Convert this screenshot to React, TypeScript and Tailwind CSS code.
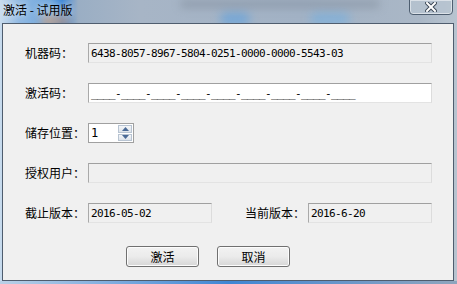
import React from "react";

const cjk = { fontFamily: '"Noto Sans CJK SC", "Noto Sans", sans-serif' };
const mono = {
  fontFamily: '"DejaVu Sans Mono", "Liberation Mono", monospace',
  letterSpacing: "-0.62px",
};

function Label({ children }: { children: React.ReactNode }) {
  return (
    <div className="w-[63px] shrink-0 text-[12px] leading-none text-black" style={cjk}>
      {children}
    </div>
  );
}

function Field({
  value,
  width,
  white,
}: {
  value?: string;
  width: string;
  white?: boolean;
}) {
  return (
    <div
      className={`${width} h-[20px] border border-t-[#a0a0a0] border-l-[#a9a9a9] border-r-[#dcdcdc] border-b-[#e3e3e3] ${
        white ? "bg-white" : "bg-[#f0f0f0]"
      } flex items-center pl-[2px] text-[11px] text-black leading-none`}
      style={mono}
    >
      {value}
    </div>
  );
}

export default function App() {
  return (
    <div
      className="relative w-[457px] h-[284px] overflow-hidden flex flex-col"
      style={{
        background:
          "linear-gradient(90deg, #c9dcee 0px, #8fb8e2 20px, #6fa7dd 50px, #3d86d6 62px, #9aaec4 78px, #a7b5c6 140px, #a2b2c5 300px, #aab7c6 420px, #b8c4d0 457px)",
      }}
    >
      {/* blurred desktop blobs */}
      <div className="absolute left-[40px] top-[14px] w-[30px] h-[14px] rounded-full bg-[#e0a070] opacity-60 blur-[4px]" />
      <div className="absolute left-[220px] top-[12px] w-[30px] h-[14px] rounded-full bg-[#5aa0e0] opacity-60 blur-[5px]" />
      <div className="absolute left-[310px] top-[12px] w-[40px] h-[14px] rounded-full bg-[#6aaee6] opacity-50 blur-[5px]" />
      <div className="absolute left-[180px] top-[0px] w-[200px] h-[8px] rounded-full bg-[#7d8896] opacity-50 blur-[4px]" />

      {/* title bar */}
      <div className="relative h-[23px] shrink-0 flex items-start">
        <div
          className="pl-[3px] pt-[3px] text-[12px] leading-[14px] text-black"
          style={{ ...cjk, textShadow: "0 0 6px rgba(255,255,255,0.9)" }}
        >
          激活 - 试用版
        </div>
        <div className="absolute left-[409px] top-[-1px] w-[44px] h-[16px] rounded-b-[4px] border border-[#4e5e70] bg-[#b8c4d2]/70 flex items-center justify-center shadow-[inset_0_0_0_1px_rgba(255,255,255,0.5)]">
          <svg width="12" height="10" viewBox="0 0 12 10">
            <path d="M2 1 L10 9 M10 1 L2 9" stroke="#3b4756" strokeWidth="4" strokeLinecap="square" />
            <path d="M2 1 L10 9 M10 1 L2 9" stroke="#ffffff" strokeWidth="2" strokeLinecap="square" />
          </svg>
        </div>
      </div>

      {/* body row */}
      <div className="relative flex flex-1 pl-[2px] pr-[3px] pb-[3px]">
        <div className="flex-1 border border-[#4f5d6e] bg-[#f0f0f0] flex flex-col pt-[19px] pl-[22px] gap-[20px]">
          <div className="flex items-center h-[20px]">
            <Label>机器码：</Label>
            <Field width="w-[344px]" value="6438-8057-8967-5804-0251-0000-0000-5543-03" />
          </div>
          <div className="flex items-center h-[20px]">
            <Label>激活码：</Label>
            <Field width="w-[344px]" white value="____-____-____-____-____-____-____-____-____" />
          </div>
          <div className="flex items-center h-[20px]">
            <Label>储存位置：</Label>
            <div className="w-[46px] h-[20px] border border-[#a0a0a0] bg-white flex items-stretch">
              <div className="flex-1 flex items-center pl-[2px] text-[12px] leading-none" style={mono}>
                1
              </div>
              <div className="w-[14px] flex flex-col my-[1px] mr-[1px] gap-[1px]">
                <div className="flex-1 border border-[#b8c4d2] bg-gradient-to-b from-[#f4f6f9] to-[#dde3ea] flex items-center justify-center">
                  <svg width="7" height="4" viewBox="0 0 7 4">
                    <path d="M0 4 L3.5 0 L7 4 Z" fill="#4a6a96" />
                  </svg>
                </div>
                <div className="flex-1 border border-[#b8c4d2] bg-gradient-to-b from-[#f4f6f9] to-[#dde3ea] flex items-center justify-center">
                  <svg width="7" height="4" viewBox="0 0 7 4">
                    <path d="M0 0 L7 0 L3.5 4 Z" fill="#4a6a96" />
                  </svg>
                </div>
              </div>
            </div>
          </div>
          <div className="flex items-center h-[20px]">
            <Label>授权用户：</Label>
            <Field width="w-[344px]" />
          </div>
          <div className="flex items-center h-[20px]">
            <Label>截止版本：</Label>
            <Field width="w-[124px]" value="2016-05-02" />
            <div className="w-[33px]" />
            <Label>当前版本：</Label>
            <Field width="w-[124px]" value="2016-6-20" />
          </div>
          <div className="flex items-center mt-[3px] pl-[101px] gap-[18px]">
            {["激活", "取消"].map((t) => (
              <div
                key={t}
                className="w-[73px] h-[21px] rounded-[3px] border border-[#707070] bg-gradient-to-b from-[#f2f2f2] via-[#ebebeb] to-[#d6d6d6] shadow-[inset_0_0_0_1px_#fcfcfc] flex items-center justify-center text-[12px] leading-none text-black"
                style={cjk}
              >
                {t}
              </div>
            ))}
          </div>
        </div>
        {/* bottom frame tint */}
        <div className="absolute left-0 right-0 bottom-0 h-[3px] bg-gradient-to-r from-[#b9d0e6] via-[#3f86d4] to-[#8fa5bd]" />
      </div>
    </div>
  );
}
